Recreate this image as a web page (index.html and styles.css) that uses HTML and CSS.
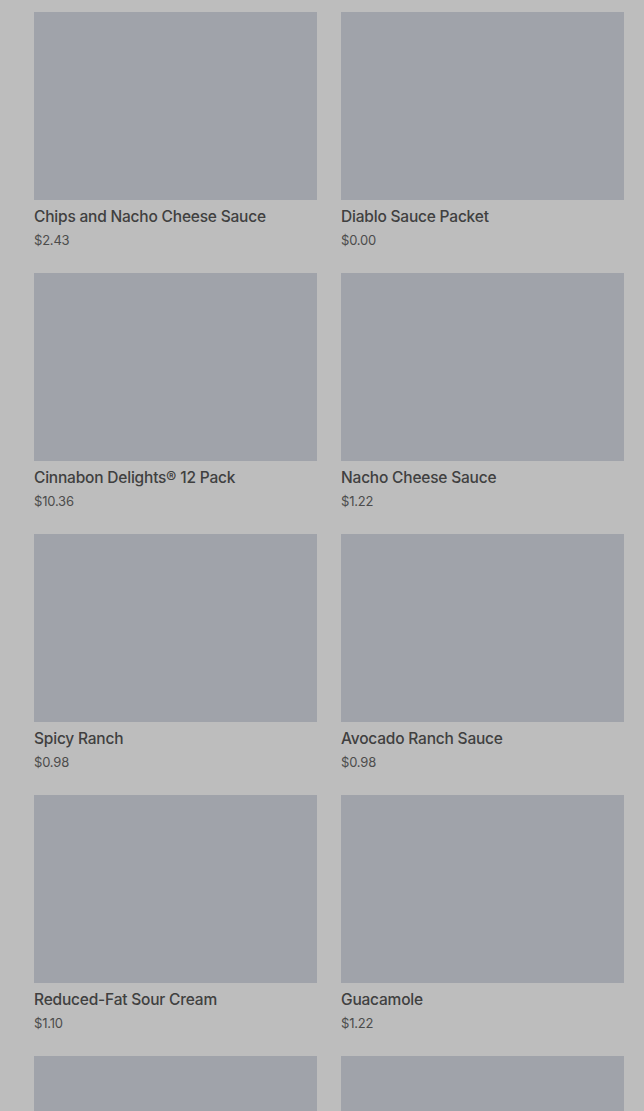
FILE: index.html
```html
<!DOCTYPE html>
<html lang="en">
<head>
<meta charset="utf-8">
<title>Menu</title>
<link rel="stylesheet" href="styles.css">
</head>
<body>
<main class="grid">
  <div class="card"><div class="img"></div><div class="name">Chips and Nacho Cheese Sauce</div><div class="price">$2.43</div></div>
  <div class="card"><div class="img"></div><div class="name">Diablo Sauce Packet</div><div class="price">$0.00</div></div>
  <div class="card"><div class="img"></div><div class="name">Cinnabon Delights® 12 Pack</div><div class="price">$10.36</div></div>
  <div class="card"><div class="img"></div><div class="name">Nacho Cheese Sauce</div><div class="price">$1.22</div></div>
  <div class="card"><div class="img"></div><div class="name">Spicy Ranch</div><div class="price">$0.98</div></div>
  <div class="card"><div class="img"></div><div class="name">Avocado Ranch Sauce</div><div class="price">$0.98</div></div>
  <div class="card"><div class="img"></div><div class="name">Reduced-Fat Sour Cream</div><div class="price">$1.10</div></div>
  <div class="card"><div class="img"></div><div class="name">Guacamole</div><div class="price">$1.22</div></div>
  <div class="card"><div class="img"></div></div>
  <div class="card"><div class="img"></div></div>
</main>
</body>
</html>
```
FILE: styles.css
```css
html, body {
  margin: 0;
  padding: 0;
  background: #bdbdbd;
  overflow: hidden;
}
body {
  font-family: Inter, Roboto, "Liberation Sans", sans-serif;
  color: #3e3e3e;
}
.grid {
  display: grid;
  grid-template-columns: 283px 283px;
  column-gap: 24px;
  row-gap: 23px;
  padding: 12px 20px 0 34px;
}
.card {
  display: flex;
  flex-direction: column;
}
.img {
  height: 188px;
  background: #a0a3aa;
}
.name {
  margin-top: 5px;
  font-size: 15.5px;
  line-height: 24px;
  font-weight: 450;
  letter-spacing: -0.2px;
  color: #404040;
}
.price {
  margin-top: 1px;
  font-size: 13px;
  line-height: 20px;
  letter-spacing: -0.2px;
  color: #4c4c4c;
}
```
